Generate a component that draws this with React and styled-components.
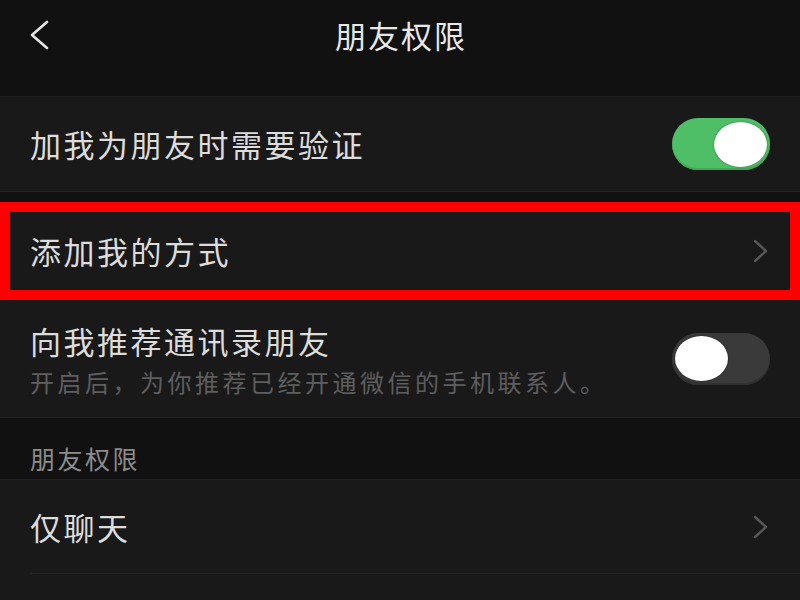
import React from 'react';
import styled, { createGlobalStyle } from 'styled-components';

const GlobalStyle = createGlobalStyle`
    html, body {
        margin: 0;
        padding: 0;
        background: #111111;
    }
    body {
        font-family: 'Noto Sans CJK SC', 'Noto Sans', sans-serif;
        -webkit-font-smoothing: antialiased;
    }
`;

const Page = styled.div`
    width: 800px;
    height: 600px;
    overflow: hidden;
    background: #111111;
    display: flex;
    flex-direction: column;
`;

const Header = styled.div`
    height: 97px;
    flex-shrink: 0;
    display: flex;
    align-items: flex-start;
    justify-content: center;
    position: relative;
    border-bottom: 1px solid #1f1f1f;
    box-sizing: border-box;
`;

const BackBtn = styled.div`
    position: absolute;
    left: 29px;
    top: 19px;
    width: 22px;
    height: 32px;
    display: flex;
`;

const Title = styled.h1`
    margin: 0;
    padding-top: 11px;
    padding-left: 2px;
    font-size: 31px;
    font-weight: 400;
    letter-spacing: 2px;
    line-height: 48px;
    color: #e8e8e8;
`;

const Row = styled.div`
    height: ${(p) => p.h}px;
    flex-shrink: 0;
    box-sizing: border-box;
    background: #191919;
    display: flex;
    align-items: center;
    justify-content: space-between;
    padding: 0 30px;
    border-bottom: ${(p) => (p.line ? '1px solid #232323' : '0')};
    ${(p) => p.marked && `
        border: 10px solid #ff0000;
        padding: 0 20px 0 20px;
    `}
`;

const Gap = styled.div`
    height: ${(p) => p.h}px;
    flex-shrink: 0;
    background: #111111;
`;

const Texts = styled.div`
    display: flex;
    flex-direction: column;
`;

const Label = styled.span`
    font-size: 31px;
    letter-spacing: 2.5px;
    line-height: 44px;
    color: #dcdcdc;
`;

const Sub = styled.span`
    font-size: 24px;
    letter-spacing: 3.5px;
    line-height: 34px;
    margin-top: 2px;
    color: #5e5e5e;
`;

const SectionHead = styled.div`
    height: 62px;
    flex-shrink: 0;
    box-sizing: border-box;
    background: #111111;
    padding: 22px 30px 0;
    font-size: 25px;
    letter-spacing: 2.5px;
    line-height: 36px;
    color: #8c8c8c;
    border-bottom: 1px solid #202020;
`;

const LastRow = styled.div`
    flex: 1;
    background: #191919;
    display: flex;
    flex-direction: column;
`;

const RowBody = styled.div`
    height: 93px;
    display: flex;
    align-items: center;
    justify-content: space-between;
    padding: 0 30px;
`;

const Divider = styled.div`
    height: 1px;
    margin-left: 30px;
    background: #262626;
`;

const Track = styled.div`
    width: 98px;
    height: 52px;
    border-radius: 26px;
    box-sizing: border-box;
    background: ${(p) => (p.on ? '#4fbf67' : '#3a3a3a')};
    display: flex;
    align-items: center;
    justify-content: ${(p) => (p.on ? 'flex-end' : 'flex-start')};
    padding: 0 3px;
    box-shadow: inset 0 -2px 0 ${(p) => (p.on ? '#3fa857' : '#303030')};
`;

const Knob = styled.div`
    width: 53px;
    height: 45px;
    border-radius: 50%;
    background: #ffffff;
    box-shadow: 0 0 2px rgba(0, 0, 0, 0.5);
`;

const Chevron = ({ color = '#575757', size = 14 }) => (
    <svg width={size + 4} height="24" viewBox="0 0 18 24" fill="none">
        <path d="M3 2 L14 12 L3 22" stroke={color} strokeWidth="2.4" strokeLinecap="round" strokeLinejoin="round" />
    </svg>
);

const Toggle = ({ on }) => (
    <Track on={on ? 1 : 0}>
        <Knob />
    </Track>
);

const App = () => {
    return (
        <Page>
            <GlobalStyle />
            <Header>
                <BackBtn>
                    <svg width="22" height="32" viewBox="0 0 22 32" fill="none">
                        <path d="M18 3 L3 16 L18 29" stroke="#e6e6e6" strokeWidth="2.6" strokeLinecap="round" strokeLinejoin="round" />
                    </svg>
                </BackBtn>
                <Title>朋友权限</Title>
            </Header>
            <Row h={95} line>
                <Label>加我为朋友时需要验证</Label>
                <Toggle on />
            </Row>
            <Gap h={10} />
            <Row h={98} marked>
                <Label>添加我的方式</Label>
                <Chevron />
            </Row>
            <Row h={118} line>
                <Texts>
                    <Label>向我推荐通讯录朋友</Label>
                    <Sub>开启后，为你推荐已经开通微信的手机联系人。</Sub>
                </Texts>
                <Toggle />
            </Row>
            <SectionHead>朋友权限</SectionHead>
            <LastRow>
                <RowBody>
                    <Label>仅聊天</Label>
                    <Chevron />
                </RowBody>
                <Divider />
            </LastRow>
        </Page>
    );
};

export default App;
